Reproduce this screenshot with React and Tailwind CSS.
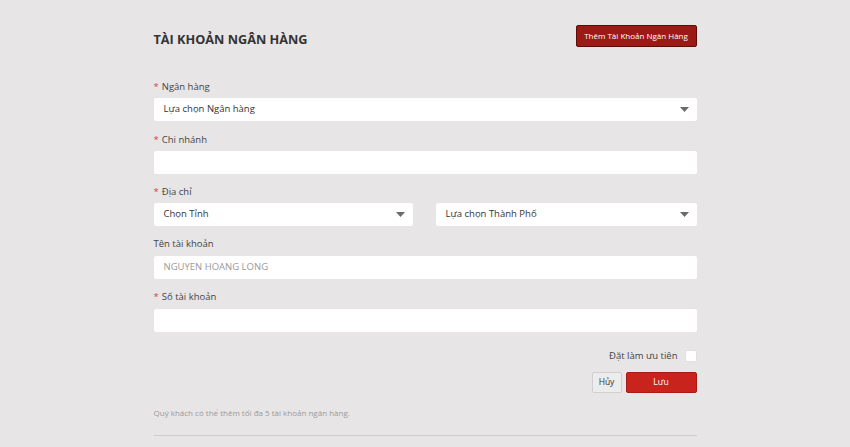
import React from 'react';

const font = { fontFamily: '"Open Sans", "Noto Sans", Arial, sans-serif' };

function Label({ required, children, className = '' }) {
  return (
    <div className={`text-[9.5px] leading-[14px] text-[#444] ${className}`}>
      {required && <span className="text-[#d0463c] mr-[3px]">*</span>}
      {children}
    </div>
  );
}

function Caret() {
  return (
    <svg width="9" height="5" viewBox="0 0 9 5" className="shrink-0">
      <path d="M0 0 H9 L4.5 5 Z" fill="#6a6a6a" />
    </svg>
  );
}

function SelectBox({ text, className = '' }) {
  return (
    <div className={`h-[23px] bg-white rounded-[2px] flex items-center justify-between pl-[10px] pr-[8px] text-[9.5px] text-[#333] ${className}`}>
      <span>{text}</span>
      <Caret />
    </div>
  );
}

function TextBox({ placeholder }) {
  return (
    <div className="h-[23px] bg-white rounded-[2px] flex items-center px-[10px] text-[9.5px] text-[#999]">
      {placeholder}
    </div>
  );
}

export default function App() {
  return (
    <div className="min-h-screen w-full bg-[#e7e5e6]" style={font}>
      <div className="w-[543px] mx-auto pt-[25px]">
        {/* header */}
        <div className="flex items-start justify-between h-[22px]">
          <h1 className="mt-[5px] text-[12.7px] leading-[18px] font-bold text-[#333]">TÀI KHOẢN NGÂN HÀNG</h1>
          <button className="h-[22px] w-[121px] bg-[#9c1a16] border border-[#5c0d0a] rounded-[2px] text-white text-[8px] leading-none">
            Thêm Tài Khoản Ngân Hàng
          </button>
        </div>

        <Label required className="mt-[33px]">Ngân hàng</Label>
        <SelectBox text="Lựa chọn Ngân hàng" className="mt-[4px]" />

        <Label required className="mt-[12px]">Chi nhánh</Label>
        <div className="mt-[4px]"><TextBox /></div>

        <Label required className="mt-[11px]">Địa chỉ</Label>
        <div className="mt-[4px] flex gap-[23px]">
          <SelectBox text="Chọn Tỉnh" className="w-[259px]" />
          <SelectBox text="Lựa chọn Thành Phố" className="flex-1" />
        </div>

        <Label className="mt-[11px]">Tên tài khoản</Label>
        <div className="mt-[5px]"><TextBox placeholder="NGUYEN HOANG LONG" /></div>

        <Label required className="mt-[11px]">Số tài khoản</Label>
        <div className="mt-[5px]"><TextBox /></div>

        <div className="mt-[18px] flex items-center justify-end gap-[7px] h-[12px]">
          <span className="text-[9.5px] text-[#444]">Đặt làm ưu tiên</span>
          <span className="w-[12px] h-[12px] bg-white rounded-[2px] border border-[#e0e0e0]" />
        </div>

        <div className="mt-[10px] flex justify-end gap-[4px]">
          <button className="h-[21px] w-[30px] bg-[#ececec] border border-[#cfcfcf] rounded-[2px] text-[8.5px] text-[#333]">Hủy</button>
          <button className="h-[21px] w-[71px] bg-[#c8241d] border border-[#a81a14] rounded-[2px] text-[8.5px] text-white">Lưu</button>
        </div>

        <p className="mt-[13px] text-[8px] leading-[14px] text-[#9a9a9a]">
          Quý khách có thể thêm tối đa 5 tài khoản ngân hàng.
        </p>

        <div className="mt-[15px] h-px bg-[#cccccc]" />
      </div>
    </div>
  );
}
